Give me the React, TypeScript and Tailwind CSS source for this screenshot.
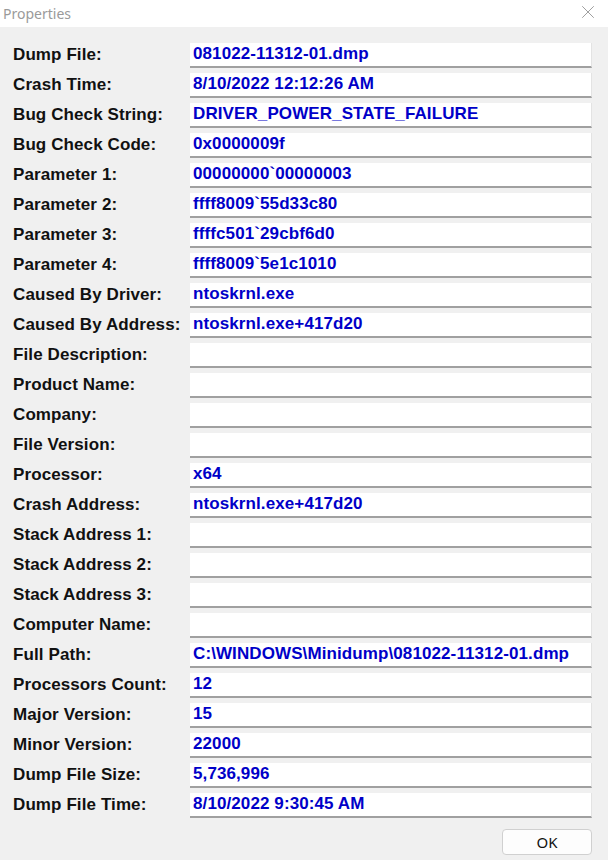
import { X } from 'lucide-react'

const rows: [string, string][] = [
  ['Dump File:', '081022-11312-01.dmp'],
  ['Crash Time:', '8/10/2022 12:12:26 AM'],
  ['Bug Check String:', 'DRIVER_POWER_STATE_FAILURE'],
  ['Bug Check Code:', '0x0000009f'],
  ['Parameter 1:', '00000000`00000003'],
  ['Parameter 2:', 'ffff8009`55d33c80'],
  ['Parameter 3:', 'ffffc501`29cbf6d0'],
  ['Parameter 4:', 'ffff8009`5e1c1010'],
  ['Caused By Driver:', 'ntoskrnl.exe'],
  ['Caused By Address:', 'ntoskrnl.exe+417d20'],
  ['File Description:', ''],
  ['Product Name:', ''],
  ['Company:', ''],
  ['File Version:', ''],
  ['Processor:', 'x64'],
  ['Crash Address:', 'ntoskrnl.exe+417d20'],
  ['Stack Address 1:', ''],
  ['Stack Address 2:', ''],
  ['Stack Address 3:', ''],
  ['Computer Name:', ''],
  ['Full Path:', 'C:\\WINDOWS\\Minidump\\081022-11312-01.dmp'],
  ['Processors Count:', '12'],
  ['Major Version:', '15'],
  ['Minor Version:', '22000'],
  ['Dump File Size:', '5,736,996'],
  ['Dump File Time:', '8/10/2022 9:30:45 AM'],
]

function FieldRow({ label, value }: { label: string; value: string }) {
  return (
    <div className="flex items-center h-[30px]">
      <span className="w-[177px] shrink-0 text-[17px] font-bold text-[#111] tracking-[0.1px]">{label}</span>
      <div className="w-[402px] h-[25px] bg-white border-b-2 border-r border-[#a0a0a0] border-r-[#e3e3e3] flex items-center pl-[3px] text-[17px] font-bold text-[#0000c8] tracking-[0.1px]">
        {value}
      </div>
    </div>
  )
}

export default function App() {
  return (
    <div className="w-[608px] h-[860px] bg-[#f0f0f0] flex flex-col font-['Liberation_Sans',Arial,sans-serif]">
      <div className="h-[27px] bg-white flex items-center justify-between pl-[3px] pr-[9px] shrink-0">
        <span className="text-[14px] text-[#9a9a9a] font-['Noto_Sans',sans-serif]">Properties</span>
        <X size={22} strokeWidth={0.9} className="text-[#8a8a8a] -mt-[3px]" />
      </div>
      <div className="flex flex-col pl-[13px] pt-[13px]">
        {rows.map(([l, v]) => (
          <FieldRow key={l} label={l} value={v} />
        ))}
      </div>
      <div className="flex justify-end pr-[16px] mt-[9px]">
        <button className="w-[90px] h-[26px] bg-[#fdfdfd] border border-[#d0d0d0] rounded-[4px] text-[15px] text-[#111] font-['Noto_Sans',sans-serif]">
          OK
        </button>
      </div>
    </div>
  )
}
